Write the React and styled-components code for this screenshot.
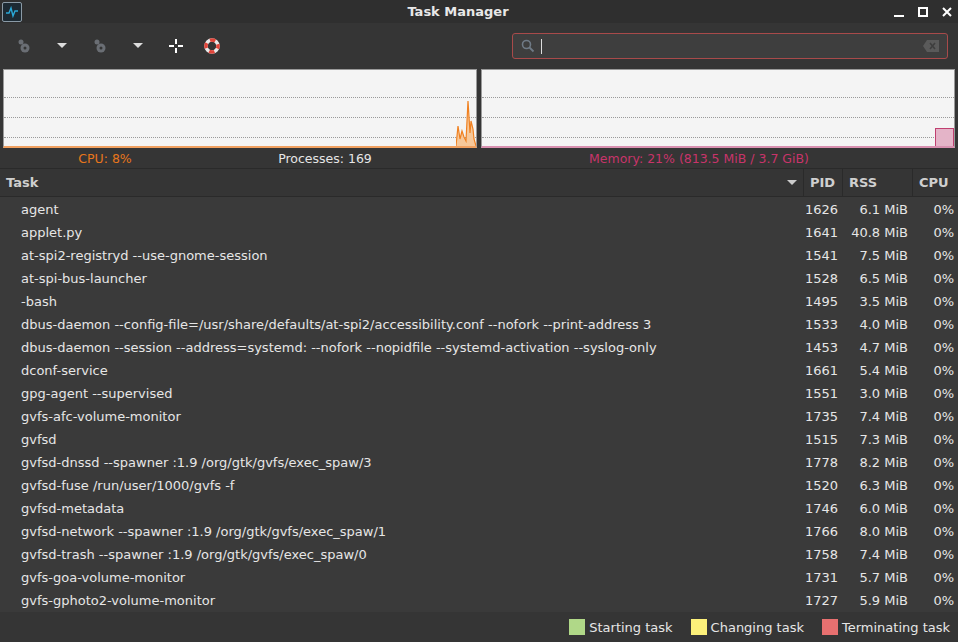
import React from 'react';
import styled, { createGlobalStyle } from 'styled-components';

const Global = createGlobalStyle`
  html, body { margin: 0; padding: 0; background: #353535; }
  body { font-family: "DejaVu Sans", sans-serif; font-size: 13px; color: #e6e6e6; }
`;

const Window = styled.div`
  width: 958px;
  height: 642px;
  display: flex;
  flex-direction: column;
  background: #353535;
  overflow: hidden;
`;

const TitleBar = styled.div`
  height: 23px;
  display: flex;
  align-items: center;
  background: #2f2f2f;
  padding: 0 6px 0 2px;
  position: relative;
`;

const Title = styled.div`
  flex: 1;
  text-align: center;
  font-weight: bold;
  font-size: 13px;
  color: #e8e8e8;
`;

const AppIcon = styled.div`
  width: 18px;
  height: 18px;
  border: 1px solid #8a9aa6;
  background: #1d2a33;
  border-radius: 2px;
  display: flex;
  align-items: center;
  justify-content: center;
`;

const WinButtons = styled.div`
  display: flex;
  gap: 14px;
  align-items: center;
`;

const Toolbar = styled.div`
  height: 46px;
  display: flex;
  align-items: center;
  padding: 0 10px 0 14px;
`;

const ToolGroup = styled.div`
  display: flex;
  align-items: center;
  gap: 0;
`;

const ToolButton = styled.div`
  width: ${(p) => p.w || 38}px;
  display: flex;
  justify-content: center;
  align-items: center;
`;

const Search = styled.div`
  margin-left: auto;
  width: 436px;
  height: 26px;
  border: 1px solid #a84a4a;
  border-radius: 3px;
  background: #3e3e3e;
  display: flex;
  align-items: center;
  padding: 0 8px;
  gap: 6px;
  box-sizing: border-box;
`;

const Caret = styled.div`
  width: 1px;
  height: 15px;
  background: #ddd;
  flex: 1;
  max-width: 1px;
`;

const Graphs = styled.div`
  display: grid;
  grid-template-columns: 474px 474px;
  gap: 4px;
  padding: 0 3px;
`;

const Graph = styled.div`
  height: 79px;
  background: #f4f4f4;
  border: 1px solid #9a9a9a;
  border-bottom: 2px solid ${(p) => p.line};
  position: relative;
  box-sizing: border-box;
  display: flex;
  flex-direction: column;
  justify-content: space-evenly;
  padding-top: 0;
`;

const GridLine = styled.div`
  border-top: 1px dotted #9a9a9a;
  height: 0;
  margin-top: 19px;
  &:first-child { margin-top: 19px; }
`;

const GraphLines = styled.div`
  display: flex;
  flex-direction: column;
`;

const Overlay = styled.svg`
  position: absolute;
  right: 0;
  bottom: 0;
`;

const Stats = styled.div`
  display: grid;
  grid-template-columns: 210px 230px 1fr;
  height: 20px;
  align-items: center;
  font-size: 12.5px;
`;

const Stat = styled.div`
  color: ${(p) => p.c};
  text-align: center;
`;

const Table = styled.div`
  flex: 1;
  display: flex;
  flex-direction: column;
  background: #3a3a3a;
  border-top: 1px solid #2a2a2a;
`;

const Row = styled.div`
  display: grid;
  grid-template-columns: 803px 39px 70px 46px;
  height: 23px;
  align-items: center;
`;

const HeadRow = styled(Row)`
  height: 27px;
  background: #353535;
  border-bottom: 1px solid #2a2a2a;
  font-weight: bold;
  color: #cfcfcf;
`;

const HeadCell = styled.div`
  height: 100%;
  display: flex;
  align-items: center;
  padding: 0 6px;
  border-left: ${(p) => (p.first ? 'none' : '1px solid #2a2a2a')};
  justify-content: space-between;
  box-sizing: border-box;
`;

const Cell = styled.div`
  text-align: ${(p) => (p.left ? 'left' : 'right')};
  padding: ${(p) => (p.left ? '0 0 0 21px' : '0 4px 0 0')};
  white-space: nowrap;
  overflow: hidden;
`;

const Rows = styled.div`
  padding-top: 1px;
`;

const Footer = styled.div`
  margin-top: auto;
  height: 30px;
  background: #353535;
  display: flex;
  justify-content: flex-end;
  align-items: center;
  gap: 18px;
  padding-right: 8px;
`;

const Legend = styled.div`
  display: flex;
  align-items: center;
  gap: 4px;
`;

const Swatch = styled.div`
  width: 16px;
  height: 16px;
  background: ${(p) => p.c};
`;

const rows = [
  ['agent', 1626, '6.1 MiB'],
  ['applet.py', 1641, '40.8 MiB'],
  ['at-spi2-registryd --use-gnome-session', 1541, '7.5 MiB'],
  ['at-spi-bus-launcher', 1528, '6.5 MiB'],
  ['-bash', 1495, '3.5 MiB'],
  ['dbus-daemon --config-file=/usr/share/defaults/at-spi2/accessibility.conf --nofork --print-address 3', 1533, '4.0 MiB'],
  ['dbus-daemon --session --address=systemd: --nofork --nopidfile --systemd-activation --syslog-only', 1453, '4.7 MiB'],
  ['dconf-service', 1661, '5.4 MiB'],
  ['gpg-agent --supervised', 1551, '3.0 MiB'],
  ['gvfs-afc-volume-monitor', 1735, '7.4 MiB'],
  ['gvfsd', 1515, '7.3 MiB'],
  ['gvfsd-dnssd --spawner :1.9 /org/gtk/gvfs/exec_spaw/3', 1778, '8.2 MiB'],
  ['gvfsd-fuse /run/user/1000/gvfs -f', 1520, '6.3 MiB'],
  ['gvfsd-metadata', 1746, '6.0 MiB'],
  ['gvfsd-network --spawner :1.9 /org/gtk/gvfs/exec_spaw/1', 1766, '8.0 MiB'],
  ['gvfsd-trash --spawner :1.9 /org/gtk/gvfs/exec_spaw/0', 1758, '7.4 MiB'],
  ['gvfs-goa-volume-monitor', 1731, '5.7 MiB'],
  ['gvfs-gphoto2-volume-monitor', 1727, '5.9 MiB'],
];

const Gear = () => (
  <svg width="14" height="16" viewBox="0 0 14 16">
    <circle cx="4" cy="4" r="2.5" fill="#6a6e74" />
    <circle cx="8" cy="10" r="4.5" fill="#6a6e74" />
    <circle cx="8" cy="10" r="1.5" fill="#353535" />
  </svg>
);

const Arrow = ({ c = '#ddd' }) => (
  <svg width="10" height="6" viewBox="0 0 10 6"><path d="M0 0h10L5 5z" fill={c} /></svg>
);

export default function App() {
  return (
    <Window>
      <Global />
      <TitleBar>
        <AppIcon>
          <svg width="14" height="12" viewBox="0 0 14 12">
            <path d="M1 7h3l2-5 2 8 2-5h3" stroke="#2aa8d8" strokeWidth="1.4" fill="none" />
          </svg>
        </AppIcon>
        <Title>Task Manager</Title>
        <WinButtons>
          <svg width="10" height="10" viewBox="0 0 10 10"><path d="M0 9h10" stroke="#fff" strokeWidth="2" /></svg>
          <svg width="10" height="10" viewBox="0 0 10 10"><rect x="1" y="1" width="8" height="8" stroke="#fff" strokeWidth="2" fill="none" /></svg>
          <svg width="10" height="10" viewBox="0 0 10 10"><path d="M1 1l8 8M9 1l-8 8" stroke="#fff" strokeWidth="2" /></svg>
        </WinButtons>
      </TitleBar>
      <Toolbar>
        <ToolGroup>
          <ToolButton w={20}><Gear /></ToolButton>
          <ToolButton w={56}><Arrow /></ToolButton>
          <ToolButton w={20}><Gear /></ToolButton>
          <ToolButton w={56}><Arrow /></ToolButton>
          <ToolButton w={20}>
            <svg width="16" height="16" viewBox="0 0 16 16">
              <path d="M8 1v5M8 10v5M1 8h5M10 8h5" stroke="#fff" strokeWidth="2" />
            </svg>
          </ToolButton>
          <ToolButton w={52}>
            <svg width="18" height="18" viewBox="0 0 18 18">
              <circle cx="9" cy="9" r="6" stroke="#e8e8e8" strokeWidth="3.5" fill="none" />
              <circle cx="9" cy="9" r="6" stroke="#e0453a" strokeWidth="3.5" fill="none" strokeDasharray="5.4 4" strokeDashoffset="2.7" />
            </svg>
          </ToolButton>
        </ToolGroup>
        <Search>
          <svg width="14" height="14" viewBox="0 0 14 14">
            <circle cx="5.5" cy="5.5" r="4" stroke="#6f7a86" strokeWidth="1.6" fill="none" />
            <path d="M8.5 8.5l4 4" stroke="#6f7a86" strokeWidth="1.8" />
          </svg>
          <Caret />
          <svg style={{ marginLeft: 'auto' }} width="16" height="12" viewBox="0 0 16 12">
            <path d="M4 0h12v12H4L0 6z" fill="#5a5a5a" />
            <path d="M7 3l5 6M12 3l-5 6" stroke="#3e3e3e" strokeWidth="1.6" />
          </svg>
        </Search>
      </Toolbar>
      <Graphs>
        <Graph line="#f0a060">
          <GraphLines><GridLine /><GridLine /><GridLine /></GraphLines>
          <Overlay width="20" height="45" viewBox="0 0 20 45">
            <path d="M0 45L2 25L4 38L6 30L8 36L10 40L12 0L14 32L15 20L17 28L18 38L20 45Z" fill="#f6c89a" />
            <path d="M0 45L2 25L4 38L6 30L8 36L10 40L12 0L14 32L15 20L17 28L18 38L20 45" fill="none" stroke="#f08020" strokeWidth="1.2" />
          </Overlay>
        </Graph>
        <Graph line="#d890b0">
          <GraphLines><GridLine /><GridLine /><GridLine /></GraphLines>
          <Overlay width="19" height="18" viewBox="0 0 19 18">
            <rect x="0.5" y="0.5" width="18" height="18" fill="#e4b4c8" stroke="#c04070" strokeWidth="1" />
          </Overlay>
        </Graph>
      </Graphs>
      <Stats>
        <Stat c="#e8761c">CPU: 8%</Stat>
        <Stat c="#e6e6e6">Processes: 169</Stat>
        <Stat c="#c8346a">Memory: 21% (813.5 MiB / 3.7 GiB)</Stat>
      </Stats>
      <Table>
        <HeadRow>
          <HeadCell first>Task <Arrow c="#ccc" /></HeadCell>
          <HeadCell>PID</HeadCell>
          <HeadCell>RSS</HeadCell>
          <HeadCell>CPU</HeadCell>
        </HeadRow>
        <Rows>
          {rows.map(([name, pid, rss]) => (
            <Row key={pid}>
              <Cell left>{name}</Cell>
              <Cell>{pid}</Cell>
              <Cell>{rss}</Cell>
              <Cell>0%</Cell>
            </Row>
          ))}
        </Rows>
        <Footer>
          <Legend><Swatch c="#b0d888" />Starting task</Legend>
          <Legend><Swatch c="#fcf07a" />Changing task</Legend>
          <Legend><Swatch c="#e87070" />Terminating task</Legend>
        </Footer>
      </Table>
    </Window>
  );
}
